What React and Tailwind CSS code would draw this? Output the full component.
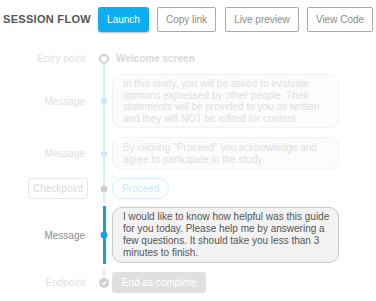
import React from "react";

const FONT = { fontFamily: '"Liberation Sans", Arial, sans-serif' };

function Row({ label, dot, children, top, bottom, wide, extra = "", topCls = "top-[-8px] h-[calc(50%+8px)]", bottomCls = "h-[calc(50%+4px)]" }) {
  const w = wide ? "w-[3px] left-[14.5px]" : "w-[2px] left-[15px]";
  return (
    <div className={`flex items-stretch py-1 relative ${extra}`}>
      <div className="w-[88px] flex items-center justify-end shrink-0">{label}</div>
      <div className="w-[24px] relative shrink-0">
        {top && <div className={`absolute ${topCls} ${w} ${top}`} />}
        {bottom && <div className={`absolute top-1/2 ${bottomCls} ${w} ${bottom}`} />}
        <div className="absolute left-[16px] top-1/2 -translate-x-1/2 -translate-y-1/2">{dot}</div>
      </div>
      <div className="flex-1 flex items-center">{children}</div>
    </div>
  );
}

export default function App() {
  const lb = "bg-[#d6f0fb]";
  return (
    <div className="w-[376px] h-[301px] bg-white overflow-hidden text-[10px]" style={FONT}>
      <div className="flex items-center pt-[7px] pl-[3px]">
        <div className="font-bold text-[11px] text-[#555] tracking-[0.3px] w-[95px] whitespace-nowrap">SESSION FLOW</div>
        <button className="h-[25px] w-[51px] rounded-[3px] bg-[#0daef0] text-white text-[10px] shadow-[0_1px_2px_rgba(0,0,0,0.25)]">Launch</button>
        <button className="ml-[8px] h-[25px] w-[59px] rounded-[2px] border border-[#aaa] text-[#8a8a8a] text-[10px]">Copy link</button>
        <button className="ml-[9px] h-[25px] w-[74px] rounded-[2px] border border-[#aaa] text-[#8a8a8a] text-[10px]">Live preview</button>
        <button className="ml-[8px] h-[25px] w-[66px] rounded-[2px] border border-[#aaa] text-[#8a8a8a] text-[10px]">View Code</button>
      </div>

      <div className="mt-[15px]">
        <Row
          label={<span className="pr-[3px] text-[#e0e0e0]">Entry point</span>}
          dot={<div className="w-[10px] h-[10px] rounded-full border-2 border-[#cfcfcf] bg-white" />}
          bottom={lb}
        >
          <div className="pl-[4px] font-bold text-[#dadada] leading-[15px]">Welcome screen</div>
        </Row>

        <Row
          label={<span className="pr-[3px] text-[#e0e0e0]">Message</span>}
          dot={<div className="w-[6px] h-[6px] rounded-full bg-[#c8ebfa]" />}
          top={lb}
          bottom={lb}
          extra="pt-[4px]"
        >
          <div className="w-[227px] rounded-[10px] border border-[#f2f2f2] bg-[#fcfcfc] pl-[10px] py-[3px] text-[#dfdfdf] leading-[11.5px] whitespace-nowrap">
            In this study, you will be asked to evaluate<br />
            opinions expressed by other people. Their<br />
            statements will be provided to you as written<br />
            and they will NOT be edited for content.
          </div>
        </Row>

        <Row
          label={<span className="pr-[3px] text-[#e0e0e0]">Message</span>}
          dot={<div className="w-[6px] h-[6px] rounded-full bg-[#c8ebfa]" />}
          top={lb}
          bottom={lb}
          extra="pt-[5px]"
        >
          <div className="w-[227px] rounded-[10px] border border-[#f2f2f2] bg-[#fcfcfc] pl-[10px] py-[4px] text-[#dfdfdf] leading-[11.5px] whitespace-nowrap">
            By clicking "Proceed" you acknowledge and<br />
            agree to participate in the study.
          </div>
        </Row>

        <Row
          label={
            <div className="h-[21px] px-[4px] flex items-center rounded-[3px] border border-[#e6e6e6] text-[#d8d8d8]">Checkpoint</div>
          }
          dot={<div className="w-[7px] h-[7px] rounded-full bg-[#cfcfcf]" />}
          top={lb}
          bottom={lb}
        >
          <div className="h-[21px] px-[9px] flex items-center rounded-full border border-[#d3effb] text-[#c4e8f8]">Proceed</div>
        </Row>

        <Row
          label={<span className="pr-[3px] text-[#8d8d8d]">Message</span>}
          dot={<div className="w-[7px] h-[7px] rounded-full bg-[#1a9fe6]" />}
          top="bg-[#1a9fe6]"
          bottom="bg-[#1a9fe6]"
          topCls="top-[-1px] h-[calc(50%+1px)]"
          bottomCls="h-[calc(50%+1px)]"
          wide
        >
          <div className="w-[227px] rounded-[10px] border border-[#c9c9c9] bg-[#f2f2f2] pl-[10px] py-[3px] text-[#555] leading-[12px] whitespace-nowrap">
            I would like to know how helpful was this guide<br />
            for you today. Please help me by answering a<br />
            few questions. It should take you less than 3<br />
            minutes to finish.
          </div>
        </Row>

        <Row
          label={<span className="pr-[3px] text-[#e0e0e0]">Endpoint</span>}
          dot={
            <div className="w-[10px] h-[10px] rounded-full bg-[#d2d2d2] flex items-center justify-center">
              <svg width="6" height="6" viewBox="0 0 6 6">
                <path d="M1 3.2 L2.5 4.5 L5 1.5" stroke="white" strokeWidth="1.2" fill="none" />
              </svg>
            </div>
          }
          top={lb}
          topCls="top-[-4px] h-[calc(50%+4px)]"
          extra="pt-[5px]"
        >
          <div className="h-[21px] w-[94px] flex items-center justify-center rounded-[3px] bg-[#e0e0e0] text-white">End as complete</div>
        </Row>
      </div>
    </div>
  );
}
